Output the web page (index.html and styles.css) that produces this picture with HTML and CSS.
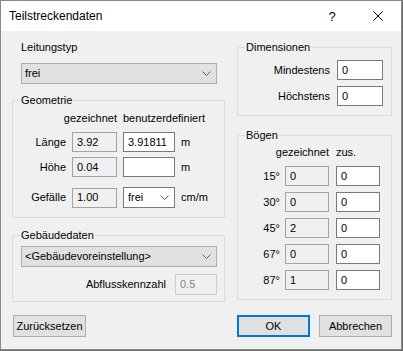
FILE: index.html
```html
<!DOCTYPE html>
<html lang="de">
<head>
  <meta charset="UTF-8" />
  <title>Teilstreckendaten</title>
  <link rel="stylesheet" href="styles.css">
</head>
<body>
  <div class="window">
    <div class="titlebar">
      <span class="title">Teilstreckendaten</span>
      <span class="cap help">?</span>
      <span class="cap">
        <svg width="10" height="10" viewBox="0 0 10 10"><path d="M0.5 0.5 L9.5 9.5 M9.5 0.5 L0.5 9.5" stroke="#000" stroke-width="1" fill="none"/></svg>
      </span>
    </div>

    <div class="client">
      <div class="columns">
        <div class="col-left">
          <div class="caption">Leitungstyp</div>
          <div class="combo wide">
            <span>frei</span>
            <svg class="chev" width="9" height="5" viewBox="0 0 9 5"><path d="M0.5 0.5 L4.5 4.5 L8.5 0.5" stroke="#606060" fill="none"/></svg>
          </div>

          <fieldset class="group geo">
            <legend>Geometrie</legend>
            <div class="geo-body">
              <div class="geo-row head">
                <span class="h1">gezeichnet</span>
                <span class="h2">benutzerdefiniert</span>
              </div>
              <div class="geo-row r1">
                <span class="lbl">Länge</span>
                <span class="box ro">3.92</span>
                <span class="box">3.91811</span>
                <span>m</span>
              </div>
              <div class="geo-row r2">
                <span class="lbl">Höhe</span>
                <span class="box ro">0.04</span>
                <span class="box"></span>
                <span>m</span>
              </div>
              <div class="geo-row r3">
                <span class="lbl">Gefälle</span>
                <span class="box ro">1.00</span>
                <span class="box drop">frei
                  <svg class="chev" width="9" height="5" viewBox="0 0 9 5"><path d="M0.5 0.5 L4.5 4.5 L8.5 0.5" stroke="#606060" fill="none"/></svg>
                </span>
                <span>cm/m</span>
              </div>
            </div>
          </fieldset>

          <fieldset class="group bld">
            <legend>Gebäudedaten</legend>
            <div class="bld-body">
              <div class="combo">
                <span>&lt;Gebäudevoreinstellung&gt;</span>
                <svg class="chev" width="9" height="5" viewBox="0 0 9 5"><path d="M0.5 0.5 L4.5 4.5 L8.5 0.5" stroke="#606060" fill="none"/></svg>
              </div>
              <div class="abfluss">
                <span>Abflusskennzahl</span>
                <span class="box off">0.5</span>
              </div>
            </div>
          </fieldset>
        </div>

        <div class="col-right">
          <fieldset class="group dim">
            <legend>Dimensionen</legend>
            <div class="dim-body">
              <div class="dim-row"><span>Mindestens</span><span class="box">0</span></div>
              <div class="dim-row"><span>Höchstens</span><span class="box">0</span></div>
            </div>
          </fieldset>

          <fieldset class="group bog">
            <legend>Bögen</legend>
            <div class="bog-body">
              <div class="bog-row head">
                <span class="h1">gezeichnet</span>
                <span class="h2">zus.</span>
              </div>
              <div class="bog-row"><span class="lbl">15°</span><span class="box ro">0</span><span class="box">0</span></div>
              <div class="bog-row"><span class="lbl">30°</span><span class="box ro">0</span><span class="box">0</span></div>
              <div class="bog-row"><span class="lbl">45°</span><span class="box ro">2</span><span class="box">0</span></div>
              <div class="bog-row"><span class="lbl">67°</span><span class="box ro">0</span><span class="box">0</span></div>
              <div class="bog-row"><span class="lbl">87°</span><span class="box ro">1</span><span class="box">0</span></div>
            </div>
          </fieldset>
        </div>
      </div>

      <div class="buttons">
        <button class="btn">Zurücksetzen</button>
        <div class="btn-right">
          <button class="btn default">OK</button>
          <button class="btn">Abbrechen</button>
        </div>
      </div>
    </div>
  </div>
</body>
</html>
```

FILE: styles.css
```css
* {
  box-sizing: border-box;
}
html, body {
  margin: 0;
}
body {
  background: #6b6b6b;
  font-family: "Liberation Sans", Arial, sans-serif;
  font-size: 11px;
  line-height: 13px;
  color: #000;
}
.window {
  width: 402px;
  height: 350px;
  border: 1px solid #8a8a8a;
  background: #f0f0f0;
  display: flex;
  flex-direction: column;
}
.titlebar {
  height: 30px;
  background: #fff;
  display: flex;
  align-items: center;
  padding-left: 8px;
}
.title {
  flex: 1;
  font-size: 12px;
}
.cap {
  width: 46px;
  height: 30px;
  display: flex;
  align-items: center;
  justify-content: center;
}
.help {
  font-size: 13px;
}

.client {
  flex: 1;
  padding: 10px 9px 0 11px;
}
.columns {
  display: flex;
  gap: 12px;
  align-items: flex-start;
}
.col-left {
  width: 213px;
}
.col-right {
  width: 155px;
}
.caption {
  margin-left: 9px;
}

/* combo boxes */
.combo {
  height: 21px;
  background: #e1e1e1;
  border: 1px solid #adadad;
  display: flex;
  align-items: center;
  justify-content: space-between;
  padding: 0 5px 0 3px;
}
.combo.wide {
  margin: 9px 8px 0 9px;
}
.chev {
  display: block;
}

/* group boxes */
.group {
  margin: 0;
  padding: 0;
  border: 1px solid #dcdcdc;
  min-width: 0;
}
.group legend {
  padding: 0 1px;
  margin-left: 7px;
  line-height: 13px;
}

/* text boxes */
.box {
  height: 20px;
  border: 1px solid #7a7a7a;
  background: #fff;
  padding-left: 4px;
  display: flex;
  align-items: center;
}
.box.ro {
  background: #f0f0f0;
  border-color: #a3a3a3;
}
.box.off {
  background: #f0f0f0;
  border-color: #cccccc;
  color: #838383;
  height: 21px;
  width: 42px;
}
.box.drop {
  height: 21px;
  justify-content: space-between;
  padding-right: 5px;
}

/* Geometrie */
.geo {
  margin-top: 10px;
}
.geo-body {
  padding: 5px 0 9px 0;
}
.geo-row {
  display: grid;
  grid-template-columns: 53px 45px 52px auto;
  column-gap: 6px;
  align-items: center;
}
.geo-row .lbl {
  text-align: right;
}
.geo-row.head .h1 {
  grid-column: 1 / 3;
  text-align: right;
}
.geo-row.head .h2 {
  grid-column: 3 / 5;
  white-space: nowrap;
}
.geo-row.r1 {
  margin-top: 7px;
}
.geo-row.r2 {
  margin-top: 5px;
}
.geo-row.r3 {
  margin-top: 10px;
}

/* Gebäudedaten */
.bld {
  margin-top: 11px;
}
.bld-body {
  padding: 4px 7px 6px 8px;
}
.abfluss {
  margin-top: 7px;
  display: flex;
  justify-content: flex-end;
  align-items: center;
  gap: 9px;
}

/* Dimensionen */
.dim-body {
  padding: 6px 8px 9px 0;
}
.dim-row {
  display: flex;
  justify-content: flex-end;
  align-items: center;
  gap: 7px;
}
.dim-row + .dim-row {
  margin-top: 6px;
}
.dim-row .box {
  width: 46px;
}

/* Bögen */
.bog {
  margin-top: 13px;
}
.bog-body {
  padding: 4px 0 9px 0;
}
.bog-row {
  display: grid;
  grid-template-columns: 42px 44px 46px;
  column-gap: 5px;
  align-items: center;
  margin-top: 6px;
}
.bog-row .box:last-child {
  margin-left: 2px;
}
.bog-row .lbl {
  text-align: right;
}
.bog-row.head {
  margin-top: 0;
}
.bog-row.head + .bog-row {
  margin-top: 7px;
}
.bog-row.head .h1 {
  grid-column: 1 / 3;
  text-align: right;
}
.bog-row.head .h2 {
  margin-left: 2px;
}

/* buttons */
.buttons {
  display: flex;
  margin-top: 13px;
  padding-left: 1px;
}
.btn-right {
  margin-left: auto;
  display: flex;
  gap: 9px;
}
.btn {
  width: 73px;
  height: 22px;
  padding: 0;
  font-family: "Liberation Sans", Arial, sans-serif;
  font-size: 11px;
  color: #000;
  background: #e1e1e1;
  border: 1px solid #adadad;
}
.btn.default {
  border: 2px solid #0078d7;
}
```
